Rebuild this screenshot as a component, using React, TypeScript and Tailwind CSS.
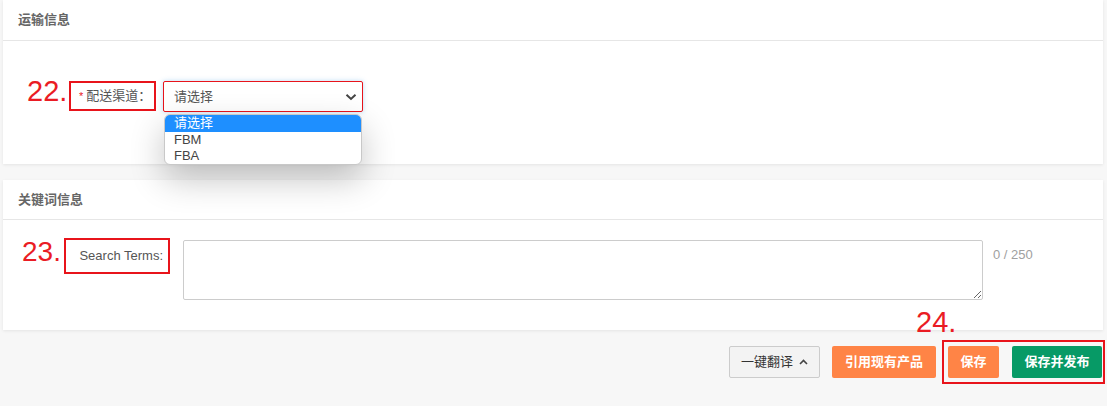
import React from "react";

const FONT = "font-['Liberation_Sans','Noto_Sans_CJK_SC',sans-serif]";

export default function App() {
  return (
    <div className={`relative w-[1107px] h-[406px] overflow-hidden bg-[#f7f7f7] ${FONT}`}>
      {/* Card 1: 运输信息 */}
      <div className="ml-[3px] w-[1100px] h-[164px] bg-white shadow-[0_1px_3px_rgba(0,0,0,0.08)]">
        <div className="h-[41px] border-b border-[#e6e6e6] flex items-center pl-[15px] text-[13px] font-bold text-[#666]">
          运输信息
        </div>
        <div className="flex items-start pt-[40px] pl-[24px]">
          <span className="w-[42px] -mt-[5px] text-[29px] leading-[30px] text-[#ea1c24]">22.</span>
          <div className="w-[87px] h-[30px] border-2 border-[#e8141b] flex items-center pl-[8px] text-[13px] text-[#555] whitespace-nowrap">
            <span className="text-[#e8141b] text-[11px] mr-[3px]">*</span>
            <span>配送渠道：</span>
          </div>
          <div className="ml-[7px] w-[200px] h-[31px] border border-[#e8141b] rounded-[2px] bg-white shadow-[0_0_5px_rgba(102,175,233,0.45)] flex items-center justify-between pl-[10px] pr-[5px] text-[13px] text-[#555]">
            <span>请选择</span>
            <svg width="12" height="8" viewBox="0 0 12 8">
              <path d="M1.5 1.8 L6 6 L10.5 1.8" fill="none" stroke="#444" strokeWidth="2" />
            </svg>
          </div>
        </div>
      </div>

      {/* Card 2: 关键词信息 */}
      <div className="mt-[16px] ml-[3px] w-[1100px] h-[150px] bg-white shadow-[0_1px_3px_rgba(0,0,0,0.08)]">
        <div className="h-[40px] border-b border-[#e6e6e6] flex items-center pl-[15px] text-[13px] font-bold text-[#666]">
          关键词信息
        </div>
        <div className="flex items-start pt-[18px] pl-[19px]">
          <span className="w-[42px] -mt-[1px] text-[28px] leading-[30px] text-[#ea1c24]">23.</span>
          <div className="w-[106px] h-[36px] border-2 border-[#e8141b] flex justify-end pt-[8px] pr-[5px] text-[13px] leading-[16px] text-[#555]">
            Search Terms:
          </div>
          <textarea
            className="ml-[13px] mt-[2px] w-[800px] h-[60px] border border-[#ccc] rounded-[2px] bg-white outline-none"
            defaultValue=""
          />
          <span className="ml-[10px] mt-[9px] text-[13px] leading-[16px] text-[#a0a0a0]">0 / 250</span>
        </div>
      </div>

      {/* Footer buttons */}
      <div className="mt-[10px] flex justify-end items-start pr-[2px]">
        <button className="mt-[6px] w-[91px] h-[32px] border border-[#ccc] rounded-[2px] bg-[#f3f3f3] flex items-center justify-center gap-[6px] text-[13px] text-[#333]">
          <span>一键翻译</span>
          <svg width="9" height="6" viewBox="0 0 9 6">
            <path d="M1 5 L4.5 1.5 L8 5" fill="none" stroke="#444" strokeWidth="1.6" />
          </svg>
        </button>
        <button className="ml-[12px] mt-[6px] w-[104px] h-[32px] rounded-[2px] bg-[#ff8446] text-white text-[13px] font-bold">
          引用现有产品
        </button>
        <div className="ml-[6px] w-[163px] h-[44px] border-2 border-[#e8141b] flex items-start pt-[4px] pl-[4px] pr-[1px]">
          <button className="w-[51px] h-[32px] rounded-[2px] bg-[#ff8446] text-white text-[13px] font-bold">
            保存
          </button>
          <button className="ml-[13px] w-[90px] h-[32px] rounded-[2px] bg-[#079a66] text-white text-[13px] font-bold">
            保存并发布
          </button>
        </div>
      </div>

      {/* Annotation 24. */}
      <span className="absolute left-[916px] top-[307px] text-[29px] leading-[30px] text-[#ea1c24]">24.</span>

      {/* Open select dropdown */}
      <div className="absolute left-[164px] top-[114px] w-[198px] h-[51px] bg-white border border-[#c8c8c8] rounded-[6px] overflow-hidden shadow-[0_14px_34px_rgba(0,0,0,0.24)] text-[13px] leading-[16px]">
        <div className="h-[17px] bg-[#1e8fff] text-white pl-[9px]">请选择</div>
        <div className="h-[16px] text-[#444] pl-[9px]">FBM</div>
        <div className="h-[16px] text-[#444] pl-[9px]">FBA</div>
      </div>
    </div>
  );
}
